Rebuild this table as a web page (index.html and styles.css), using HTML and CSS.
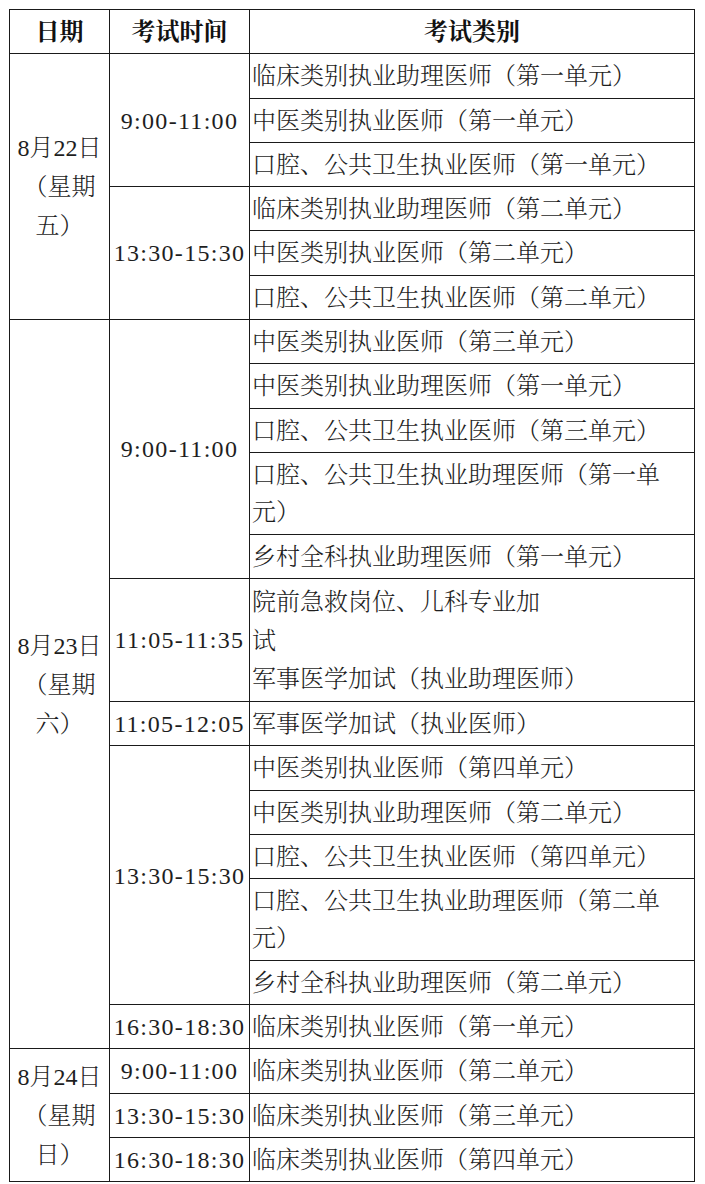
FILE: index.html
```html
<!DOCTYPE html>
<html lang="zh-CN">
<head>
<meta charset="utf-8">
<title>考试时间安排</title>
<link rel="stylesheet" href="styles.css">
</head>
<body>
<table class="schedule">
  <colgroup>
    <col class="c-date">
    <col class="c-time">
    <col class="c-cat">
  </colgroup>
  <thead>
    <tr><th>日期</th><th>考试时间</th><th>考试类别</th></tr>
  </thead>
  <tbody>
    <tr><td class="date" rowspan="6">8月22日<br>（星期<br>五）</td><td class="tm" rowspan="3">9:00-11:00</td><td class="cat">临床类别执业助理医师（第一单元）</td></tr>
    <tr><td class="cat">中医类别执业医师（第一单元）</td></tr>
    <tr><td class="cat">口腔、公共卫生执业医师（第一单元）</td></tr>
    <tr><td class="tm" rowspan="3">13:30-15:30</td><td class="cat">临床类别执业助理医师（第二单元）</td></tr>
    <tr><td class="cat">中医类别执业医师（第二单元）</td></tr>
    <tr><td class="cat">口腔、公共卫生执业医师（第二单元）</td></tr>

    <tr><td class="date" rowspan="13">8月23日<br>（星期<br>六）</td><td class="tm" rowspan="5">9:00-11:00</td><td class="cat">中医类别执业医师（第三单元）</td></tr>
    <tr><td class="cat">中医类别执业助理医师（第一单元）</td></tr>
    <tr><td class="cat">口腔、公共卫生执业医师（第三单元）</td></tr>
    <tr><td class="cat">口腔、公共卫生执业助理医师（第一单<br>元）</td></tr>
    <tr><td class="cat">乡村全科执业助理医师（第一单元）</td></tr>
    <tr><td class="tm">11:05-11:35</td><td class="cat tall">院前急救岗位、儿科专业加<br>试<br>军事医学加试（执业助理医师）</td></tr>
    <tr><td class="tm">11:05-12:05</td><td class="cat">军事医学加试（执业医师）</td></tr>
    <tr><td class="tm" rowspan="5">13:30-15:30</td><td class="cat">中医类别执业医师（第四单元）</td></tr>
    <tr><td class="cat">中医类别执业助理医师（第二单元）</td></tr>
    <tr><td class="cat">口腔、公共卫生执业医师（第四单元）</td></tr>
    <tr><td class="cat">口腔、公共卫生执业助理医师（第二单<br>元）</td></tr>
    <tr><td class="cat">乡村全科执业助理医师（第二单元）</td></tr>
    <tr><td class="tm">16:30-18:30</td><td class="cat">临床类别执业医师（第一单元）</td></tr>

    <tr><td class="date" rowspan="3">8月24日<br>（星期<br>日）</td><td class="tm">9:00-11:00</td><td class="cat">临床类别执业医师（第二单元）</td></tr>
    <tr><td class="tm">13:30-15:30</td><td class="cat">临床类别执业医师（第三单元）</td></tr>
    <tr><td class="tm">16:30-18:30</td><td class="cat">临床类别执业医师（第四单元）</td></tr>
  </tbody>
</table>
</body>
</html>
```
FILE: styles.css
```css
html, body {
  margin: 0;
  padding: 0;
  background: #ffffff;
}

.schedule {
  margin: 9px 0 0 9px;
  border-collapse: collapse;
  table-layout: fixed;
  width: 685px;
  font-family: "Liberation Serif", "Noto Serif CJK SC", "Noto Sans CJK SC", serif;
  font-size: 24px;
  font-weight: 300;
  color: #1e1e1e;
}

.c-date { width: 100px; }
.c-time { width: 140px; }
.c-cat { width: 445px; }

.schedule th,
.schedule td {
  border: 1px solid #1a1a1a;
  padding: 4px 2px 2px 2px;
  line-height: 37.3px;
  vertical-align: middle;
}

.schedule th {
  font-weight: 700;
  text-align: center;
  color: #111;
}

.schedule td.date {
  text-align: center;
  line-height: 39px;
}

.schedule td.tm {
  text-align: center;
  letter-spacing: 1.3px;
  white-space: nowrap;
  padding-left: 0;
  padding-right: 0;
}

.cat {
  text-align: left;
}

.schedule td.tall {
  line-height: 38.7px;
}
```
